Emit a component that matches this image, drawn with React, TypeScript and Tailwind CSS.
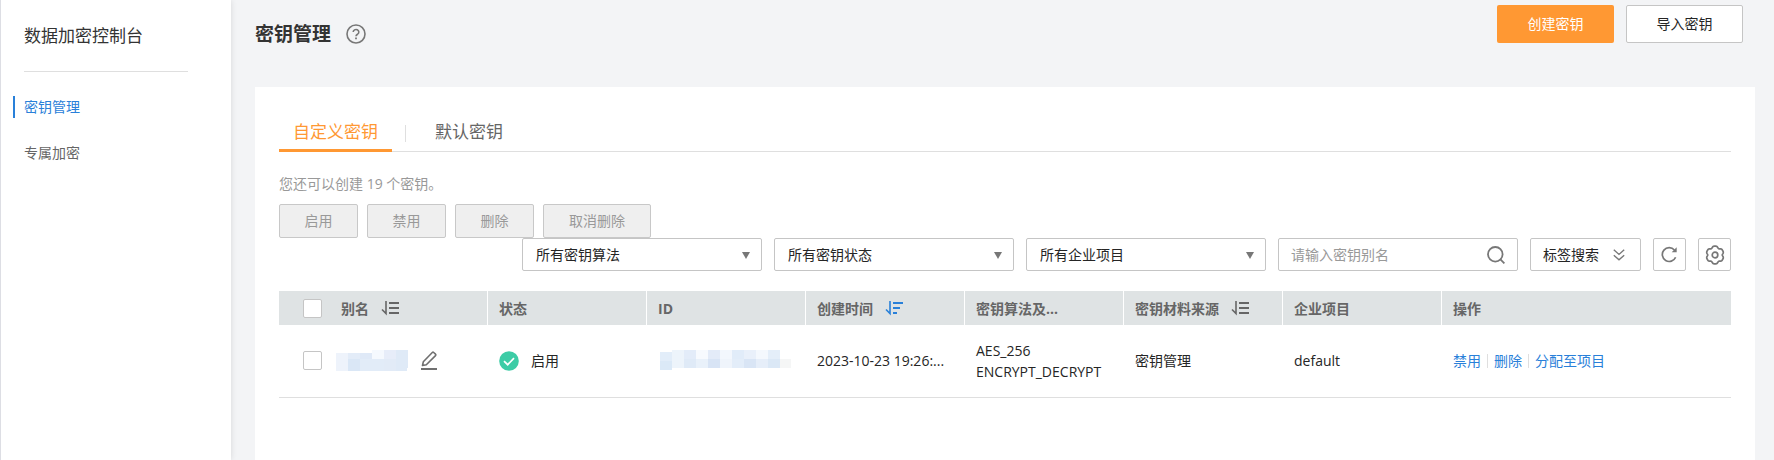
import type { ReactNode } from "react";

type Cell = [number, number, number, number, string];

const ALIAS_MASK: Cell[] = [
  [0, 3, 12, 18, "#eef3fb"],
  [12, 3, 12, 6, "#e3ecf8"],
  [12, 9, 12, 12, "#dae7f6"],
  [24, 3, 12, 6, "#dfe9f7"],
  [24, 9, 24, 12, "#e2ecf8"],
  [36, 0, 12, 9, "#f5f9fe"],
  [48, 0, 12, 9, "#e7edf9"],
  [48, 9, 12, 12, "#e2ebf7"],
  [60, 0, 12, 18, "#dfeaf7"],
  [60, 18, 11, 3, "#dfeaf7"],
];

const ID_MASK: Cell[] = [
  [0, 2, 12, 9, "#e2edf9"],
  [0, 11, 12, 9, "#dbe9f7"],
  [12, 0, 12, 18, "#edf4fb"],
  [24, 0, 12, 9, "#e3ecf9"],
  [24, 9, 12, 9, "#dfeaf7"],
  [36, 0, 12, 9, "#f7fafe"],
  [36, 9, 12, 9, "#e9f1fa"],
  [48, 0, 12, 9, "#e3ebf8"],
  [48, 9, 12, 9, "#d8e4f5"],
  [60, 0, 12, 9, "#f3f7fd"],
  [60, 9, 12, 9, "#eff4fb"],
  [72, 0, 12, 9, "#e1ecf9"],
  [72, 9, 12, 9, "#e3edf9"],
  [84, 0, 12, 9, "#e9f0fa"],
  [84, 9, 12, 9, "#d9e5f5"],
  [96, 0, 12, 9, "#f4f8fd"],
  [96, 9, 12, 9, "#e6eef9"],
  [108, 0, 12, 9, "#e4eef9"],
  [108, 9, 12, 9, "#dbe8f6"],
  [120, 9, 11, 9, "#f5f6f6"],
];

// Outline of a six-lobed gear centred on (10, 10).
const GEAR_POINTS = Array.from({ length: 72 }, (_, i) => {
  const a = (i * Math.PI) / 36;
  const r = 8.3 + 0.8 * Math.cos(6 * a) - 0.25 * Math.cos(12 * a);
  return `${(10 + r * Math.sin(a)).toFixed(2)},${(10 - r * Math.cos(a)).toFixed(2)}`;
}).join(" ");

function Mask({ cells, width }: { cells: Cell[]; width: number }) {
  return (
    <svg width={width} height={21} viewBox={`0 0 ${width} 21`} shapeRendering="crispEdges" aria-hidden="true">
      {cells.map(([x, y, w, h, fill], i) => (
        <rect key={i} x={x} y={y} width={w} height={h} fill={fill} />
      ))}
    </svg>
  );
}

function SortIcon({ descending = false }: { descending?: boolean }) {
  return (
    <svg
      className={descending ? "shrink-0 text-[#2980d9]" : "shrink-0 text-[#666]"}
      width="18"
      height="16"
      viewBox="0 0 18 16"
      fill="none"
      stroke="currentColor"
      strokeWidth="2"
      aria-hidden="true"
    >
      <path d="M5 1v12.500L1 9.500" strokeWidth="1.600" />
      <path d={descending ? "M8 3h10M8 8h7M8 13h4" : "M8 3h10M8 8h10M8 13h10"} />
    </svg>
  );
}

function FilterSelect({ label }: { label: string }) {
  return (
    <div className="relative w-60">
      <select
        aria-label={label}
        className="block h-[33px] w-full appearance-none rounded-xs border border-[#c5c5c5] bg-white pr-8 pl-[13px] text-[14px] text-[#252525]"
      >
        <option>{label}</option>
      </select>
      <svg className="pointer-events-none absolute top-[14px] right-3" width="8" height="7" viewBox="0 0 8 7" aria-hidden="true">
        <path d="M0 0h8L4 7z" fill="#777" />
      </svg>
    </div>
  );
}

function BatchButton({ wide = false, children }: { wide?: boolean; children: ReactNode }) {
  return (
    <button
      type="button"
      disabled
      className={`${wide ? "w-[108px]" : "w-[79px]"} h-[34px] rounded-xs border border-[#c8c8c8] bg-[#efefef] pb-[2px] text-[14px] text-[#999]`}
    >
      {children}
    </button>
  );
}

const checkboxClass = "block size-[19px] shrink-0 appearance-none rounded-xs border border-[#c5c5c5] bg-white";
const headClass = "border-l border-white pl-[11px] text-left font-bold";
const iconButtonClass =
  "flex size-[33px] items-center justify-center rounded-xs border border-[#c5c5c5] bg-white text-[#777]";

export default function App() {
  return (
    <div className="flex min-h-screen bg-[#f3f4f6] font-['Open_Sans','Noto_Sans_CJK_SC',sans-serif] text-[14px] leading-[21px] text-[#252525]">
      <aside className="z-10 w-[231px] shrink-0 border-l border-[#dddee4] bg-white shadow-[0_0_6px_rgba(0,0,0,0.12)]">
        <h2 className="mr-[43px] ml-[23px] border-b border-[#dfdfdf] pt-6 pb-[23px] text-[17px] leading-6 text-[#333]">
          数据加密控制台
        </h2>
        <nav className="mt-6 flex flex-col gap-6 pl-3">
          <a href="#keys" className="border-l-2 border-[#2980d9] pl-[9px] leading-[22px] text-[#2980d9]">
            密钥管理
          </a>
          <a href="#dedicated" className="border-l-2 border-transparent pl-[9px] leading-[22px] text-[#666]">
            专属加密
          </a>
        </nav>
      </aside>

      <main className="flex min-w-0 flex-1 flex-col pr-[19px] pl-6">
        <header className="flex h-[87px] items-start justify-between pr-3">
          <div className="flex items-center gap-[15px] pt-5">
            <h1 className="text-[19px] leading-7 font-bold text-[#333]">密钥管理</h1>
            <button type="button" aria-label="帮助" className="text-[#777]">
              <svg width="20" height="20" viewBox="0 0 20 20" fill="none" stroke="currentColor" strokeWidth="1.600" aria-hidden="true">
                <circle cx="10" cy="10" r="9" />
                <path d="M7.200 8.100a2.800 2.600 0 1 1 4.400 2.100c-1 .7-1.600 1.100-1.600 2.100" />
                <path d="M10 13.600v1.700" strokeWidth="1.800" />
              </svg>
            </button>
          </div>
          <div className="flex gap-3 pt-[5px]">
            <button type="button" className="h-[38px] w-[117px] rounded-xs bg-[#ff9833] pb-[2px] text-white">
              创建密钥
            </button>
            <button type="button" className="h-[38px] w-[117px] rounded-xs border border-[#c5c5c5] bg-white pb-[2px]">
              导入密钥
            </button>
          </div>
        </header>

        <section className="flex-1 bg-white px-6 pt-7">
          <div role="tablist" className="flex items-stretch border-b border-[#dfdfdf] text-[17px] leading-[34px]">
            <button type="button" role="tab" aria-selected="true" className="-mb-px border-b-3 border-[#ff9833] px-[14px] text-[#ff9833]">
              自定义密钥
            </button>
            <span className="mt-[10px] ml-[13px] h-[17px] w-px bg-[#dfdfdf]" />
            <button type="button" role="tab" aria-selected="false" className="-mb-px ml-[15px] border-b-3 border-transparent px-[14px] text-[#666]">
              默认密钥
            </button>
          </div>

          <p className="pt-[21px] pb-[10px] text-[#999]">您还可以创建 19 个密钥。</p>

          <div className="flex gap-[9px]">
            <BatchButton>启用</BatchButton>
            <BatchButton>禁用</BatchButton>
            <BatchButton>删除</BatchButton>
            <BatchButton wide>取消删除</BatchButton>
          </div>

          <div className="flex justify-end gap-3">
            <FilterSelect label="所有密钥算法" />
            <FilterSelect label="所有密钥状态" />
            <FilterSelect label="所有企业项目" />
            <div className="flex h-[33px] w-60 items-center rounded-xs border border-[#c5c5c5] bg-white px-3">
              <input
                type="text"
                aria-label="密钥别名"
                placeholder="请输入密钥别名"
                className="min-w-0 flex-1 bg-transparent text-[14px] outline-none placeholder:text-[#999]"
              />
              <button type="button" aria-label="搜索" className="text-[#777]">
                <svg width="18" height="18" viewBox="0 0 18 18" fill="none" stroke="currentColor" strokeWidth="1.800" aria-hidden="true">
                  <circle cx="8.300" cy="8.300" r="7.300" />
                  <path d="M13.400 13.400l4 4" />
                </svg>
              </button>
            </div>
            <button type="button" className="flex h-[33px] w-[111px] items-center gap-[14px] rounded-xs border border-[#c5c5c5] bg-white pl-3">
              标签搜索
              <svg width="12" height="12" viewBox="0 0 12 12" fill="none" stroke="#777" strokeWidth="1.400" aria-hidden="true">
                <path d="M.8.8 6 5.400 11.200.8M.8 6.200 6 10.800l5.200-4.600" />
              </svg>
            </button>
            <button type="button" aria-label="刷新" className={iconButtonClass}>
              <svg width="17" height="17" viewBox="0 0 17 17" fill="none" stroke="currentColor" strokeWidth="1.700" aria-hidden="true">
                <path d="M14.600 11.200A6.900 6.900 0 1 1 13.400 4" />
                <path d="M15.700 1.200v5h-5z" fill="currentColor" stroke="none" />
              </svg>
            </button>
            <button type="button" aria-label="设置" className={iconButtonClass}>
              <svg width="20" height="20" viewBox="0 0 20 20" fill="none" stroke="currentColor" strokeWidth="1.700" strokeLinejoin="round" aria-hidden="true">
                <polygon points={GEAR_POINTS} />
                <circle cx="10" cy="10" r="2.800" />
              </svg>
            </button>
          </div>

          <table className="mt-5 w-full table-fixed border-separate border-spacing-0">
            <colgroup>
              <col className="w-[208px]" />
              <col className="w-[159px]" />
              <col className="w-[159px]" />
              <col className="w-[159px]" />
              <col className="w-[159px]" />
              <col className="w-[159px]" />
              <col className="w-[159px]" />
              <col />
            </colgroup>
            <thead className="bg-[#dfe3e4] text-[#666]">
              <tr className="h-[34px]">
                <th className="pl-6 text-left font-bold">
                  <div className="flex items-center">
                    <input type="checkbox" aria-label="全选" className={checkboxClass} />
                    <span className="mr-3 ml-[19px]">别名</span>
                    <SortIcon />
                  </div>
                </th>
                <th className={headClass}>状态</th>
                <th className={headClass}>ID</th>
                <th className={headClass}>
                  <div className="flex items-center gap-3">
                    创建时间
                    <SortIcon descending />
                  </div>
                </th>
                <th className={headClass}>密钥算法及...</th>
                <th className={headClass}>
                  <div className="flex items-center gap-3">
                    密钥材料来源
                    <SortIcon />
                  </div>
                </th>
                <th className={headClass}>企业项目</th>
                <th className={headClass}>操作</th>
              </tr>
            </thead>
            <tbody>
              <tr className="h-[73px] [&>td]:border-b [&>td]:border-[#dfdfdf] [&>td]:pb-px">
                <td className="pl-6">
                  <div className="flex items-center">
                    <input type="checkbox" aria-label="选择密钥" className={checkboxClass} />
                    <span className="mr-3 ml-[14px]">
                      <Mask cells={ALIAS_MASK} width={72} />
                    </span>
                    <button type="button" aria-label="编辑别名">
                      <svg width="18" height="19" viewBox="0 0 18 19" fill="none" stroke="#707070" strokeWidth="1.600" aria-hidden="true">
                        <path d="M2.500 14.500 3.300 10.800 12.300 1.500Q13 .9 13.700 1.500L15.500 3.200Q16.100 3.900 15.500 4.600L6.300 13.700Z" strokeLinejoin="round" />
                        <path d="M1 18h16" strokeWidth="2" />
                      </svg>
                    </button>
                  </div>
                </td>
                <td className="pl-3">
                  <div className="flex items-center gap-3">
                    <svg width="20" height="20" viewBox="0 0 20 20" aria-hidden="true">
                      <circle cx="10" cy="10" r="9.800" fill="#3dcca6" />
                      <path d="M5 10.200 8.700 13.700 15 7.200" fill="none" stroke="#fff" strokeWidth="1.700" />
                    </svg>
                    启用
                  </div>
                </td>
                <td className="pl-[14px]">
                  <Mask cells={ID_MASK} width={131} />
                </td>
                <td className="pl-3 whitespace-nowrap">2023-10-23 19:26:...</td>
                <td className="pl-3">
                  AES_256
                  <br />
                  ENCRYPT_DECRYPT
                </td>
                <td className="pl-3">密钥管理</td>
                <td className="pl-3">default</td>
                <td className="pl-3">
                  <div className="flex items-center text-[#2980d9]">
                    <a href="#disable">禁用</a>
                    <span className="mx-[6px] h-[14px] w-px bg-[#dfdfdf]" />
                    <a href="#delete">删除</a>
                    <span className="mx-[6px] h-[14px] w-px bg-[#dfdfdf]" />
                    <a href="#assign">分配至项目</a>
                  </div>
                </td>
              </tr>
            </tbody>
          </table>
        </section>
      </main>
    </div>
  );
}
